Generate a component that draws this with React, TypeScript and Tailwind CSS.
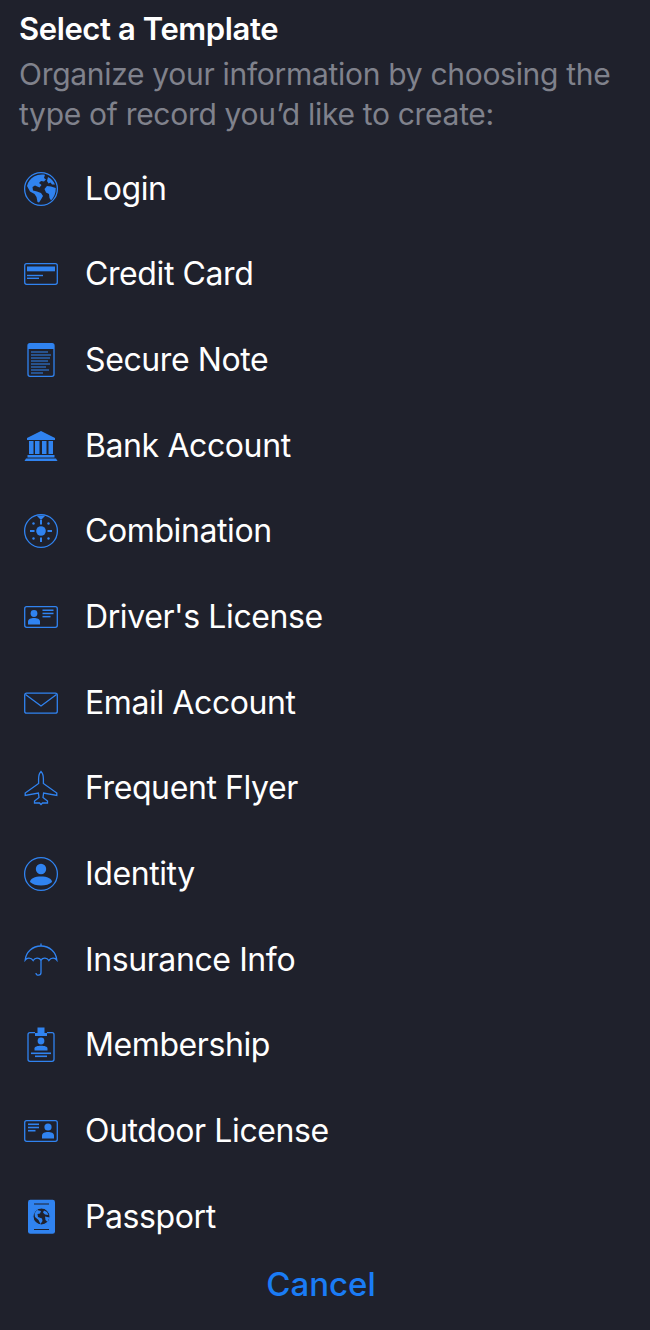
const blue = "#3083f0";

function Icon({ children }: { children: React.ReactNode }) {
  return (
    <svg viewBox="0 0 36 36" className="h-9 w-9 shrink-0" fill="none" stroke={blue} strokeWidth="1.3">
      {children}
    </svg>
  );
}

const Globe = () => (
  <Icon>
    <circle cx="18" cy="18" r="16.4" />
    <path
      fill={blue}
      stroke="none"
      d="M11 5.5 C14 3.6 19 3 22 3.8 L21 7 L23 8.5 L21 10.5 L18 10 L16 12 L18.5 14 L16.5 16.5 L12 14.5 L9.5 16 L10 19.5 L14 20.5 L18 22 L20 25 L18 28.5 L16 31.5 L14.5 31 L13.5 26 L11.5 23 L7 20.5 L4 15 C5 11 7.5 7.5 11 5.5 Z"
    />
    <path
      fill={blue}
      stroke="none"
      d="M25 6 C28 7.5 30.5 10 32 13.5 L29 13.5 L27.5 11.5 L25.5 12.5 L24 10 Z M24 15 L28 15.5 L32.8 17 C33 22 31 26.5 28 29.5 L26.5 27 L26 23 L23 21.5 L21.5 18 Z"
    />
  </Icon>
);

const Card = () => (
  <Icon>
    <rect x="1.7" y="7.7" width="32.6" height="20.6" rx="2" />
    <rect x="4" y="10.5" width="28" height="4.8" fill={blue} stroke="none" />
    <rect x="4" y="18.8" width="16" height="1.4" fill={blue} stroke="none" />
    <rect x="4" y="21.6" width="12" height="1.4" fill={blue} stroke="none" />
  </Icon>
);

const Note = () => (
  <Icon>
    <rect x="5" y="1.7" width="26" height="32.6" rx="2" />
    <path d="M5 7 V3.5 C5 2.4 5.9 1.7 7 1.7 H29 C30.1 1.7 31 2.4 31 3.5 V7 Z" fill={blue} stroke="none" />
    <path strokeWidth="1.2" d="M8 10 H25 M8 13 H28 M8 16 H27 M8 19 H25 M8 22 H27 M8 25 H23 M8 28 H26 M8 31 H20" />
  </Icon>
);

const Bank = () => (
  <Icon>
    <g fill={blue} stroke="none">
      <path d="M18 3 L32 10 V12 H4 V10 Z" />
      <rect x="6" y="13" width="4.5" height="13" />
      <rect x="12" y="13" width="4.5" height="13" />
      <rect x="19" y="13" width="4.5" height="13" />
      <rect x="25.5" y="13" width="4.5" height="13" />
      <rect x="4.5" y="27" width="27" height="2.5" />
      <path d="M3 30.5 H33 L34.5 33 H1.5 Z" />
    </g>
  </Icon>
);

const Combo = () => (
  <Icon>
    <circle cx="18" cy="18" r="16.4" />
    <path d="M13.5 2.4 H22.5 L18 7 Z" fill={blue} stroke="none" />
    <circle cx="18" cy="18" r="4.8" fill={blue} stroke="none" />
    <g fill={blue} stroke="none">
      <rect x="17" y="7" width="2" height="4.5" />
      <rect x="17" y="24.5" width="2" height="4.5" />
      <rect x="7" y="17" width="4.5" height="2" />
      <rect x="24.5" y="17" width="4.5" height="2" />
      <circle cx="10.5" cy="10.5" r="1.2" />
      <circle cx="25.5" cy="10.5" r="1.2" />
      <circle cx="10.5" cy="25.5" r="1.2" />
      <circle cx="25.5" cy="25.5" r="1.2" />
    </g>
  </Icon>
);

const License = () => (
  <Icon>
    <rect x="1.7" y="7.7" width="32.6" height="20.6" rx="2" />
    <g fill={blue} stroke="none">
      <circle cx="11" cy="14.5" r="3.4" />
      <path d="M5 25.5 V22.5 C5 20 8 19 11 19 C14 19 17 20 17 22.5 V25.5 Z" />
      <rect x="19.5" y="10.5" width="11" height="1.5" />
      <rect x="19.5" y="13.7" width="11" height="1.5" />
      <rect x="19.5" y="16.9" width="8" height="1.5" />
    </g>
  </Icon>
);

const Mail = () => (
  <Icon>
    <rect x="1.7" y="8.2" width="32.6" height="20" rx="2" />
    <path d="M2.5 9.5 L18 21 L33.5 9.5" />
  </Icon>
);

const Plane = () => (
  <Icon>
    <path d="M18 1.5 C19.6 3 20.4 6 20.4 9 V13.5 L33.8 23 V25.5 L20.6 23 L20 27.5 L24.5 31 V33 H19.5 L18 34.5 L16.5 33 H11.5 V31 L16 27.5 L15.4 23 L2.2 25.5 V23 L15.6 13.5 V9 C15.6 6 16.4 3 18 1.5 Z" />
  </Icon>
);

const Person = () => (
  <Icon>
    <circle cx="18" cy="18" r="16.4" />
    <circle cx="18" cy="13" r="5.2" fill={blue} stroke="none" />
    <path d="M7 26 C7 22.5 12 20.5 18 20.5 C24 20.5 29 22.5 29 26 C26.5 28.5 22.5 29.5 18 29.5 C13.5 29.5 9.5 28.5 7 26 Z" fill={blue} stroke="none" />
  </Icon>
);

const Umbrella = () => (
  <Icon>
    <path d="M18 1.5 V4" />
    <path d="M2.2 18 C3 10 9.5 4 18 4 C26.5 4 33 10 33.8 18 C32 15.5 28 15.5 25.8 18.5 C24 15.5 20 15.2 18 18 C16 15.2 12 15.5 10.2 18.5 C8 15.5 4 15.5 2.2 18 Z" />
    <path d="M18 17.5 V30.5 C18 34 13 34 13 31" />
  </Icon>
);

const Badge = () => (
  <Icon>
    <path d="M12 5.7 H7 C5.9 5.7 5 6.6 5 7.7 V32.3 C5 33.4 5.9 34.3 7 34.3 H29 C30.1 34.3 31 33.4 31 32.3 V7.7 C31 6.6 30.1 5.7 29 5.7 H24" />
    <g fill={blue} stroke="none">
      <path d="M14.5 0.5 H21.5 V6 H24 V9 H12 V6 H14.5 Z" />
      <circle cx="18" cy="14" r="3.4" />
      <path d="M11.5 23.5 V21.5 C11.5 19.5 14.5 18.7 18 18.7 C21.5 18.7 24.5 19.5 24.5 21.5 V23.5 Z" />
      <rect x="8" y="25.5" width="20" height="1.6" />
      <rect x="12" y="28.5" width="12" height="1.6" />
    </g>
  </Icon>
);

const Outdoor = () => (
  <Icon>
    <rect x="1.7" y="7.7" width="32.6" height="20.6" rx="2" />
    <g fill={blue} stroke="none">
      <circle cx="25" cy="14" r="3.6" />
      <path d="M19 25.5 V22.5 C19 20 22 19 25 19 C28 19 31 20 31 22.5 V25.5 Z" />
      <rect x="5" y="10.5" width="11" height="1.6" />
      <rect x="5" y="13.7" width="11" height="1.6" />
      <rect x="5" y="16.9" width="7.5" height="1.6" />
    </g>
  </Icon>
);

const Passport = () => (
  <Icon>
    <rect x="5" y="0.8" width="27" height="34" rx="2.4" fill={blue} stroke="none" />
    <circle cx="18.5" cy="17.5" r="8.6" fill="#1f212c" />
    <path
      fill={blue}
      stroke="none"
      d="M14 11 L18 12 L17 14.5 L14.5 15 L15 18 L19 19.5 L19.5 22 L17.5 25 L15.5 21 L12 18 L11.5 14.5 Z M21 11.5 L24 13 L25.5 16 L22 15.5 L20 13.5 Z M22 17.5 L26.5 18.5 L24.5 23 L22.5 21 Z"
    />
    <rect x="11" y="4.5" width="15" height="1" fill="#1f212c" stroke="none" />
    <rect x="11" y="30" width="15" height="1" fill="#1f212c" stroke="none" />
  </Icon>
);

const templates = [
  { name: "Login", icon: Globe },
  { name: "Credit Card", icon: Card },
  { name: "Secure Note", icon: Note },
  { name: "Bank Account", icon: Bank },
  { name: "Combination", icon: Combo },
  { name: "Driver's License", icon: License },
  { name: "Email Account", icon: Mail },
  { name: "Frequent Flyer", icon: Plane },
  { name: "Identity", icon: Person },
  { name: "Insurance Info", icon: Umbrella },
  { name: "Membership", icon: Badge },
  { name: "Outdoor License", icon: Outdoor },
  { name: "Passport", icon: Passport },
];

export default function App() {
  return (
    <div className="flex h-[1330px] w-[650px] flex-col overflow-hidden bg-[#1f212c] font-['Inter',sans-serif]">
      <div className="px-[19px] pt-[9px]">
        <h1 className="text-[31px] leading-[40px] font-semibold tracking-[-0.4px] text-white">Select a Template</h1>
        <p className="mt-[5px] text-[30px] leading-[40px] tracking-[-0.3px] text-[#80828c]">
          Organize your information by choosing the type of record you’d like to create:
        </p>
      </div>
      <ul className="mt-[12px] flex flex-col">
        {templates.map((t) => (
          <li key={t.name} className="flex h-[85.67px] items-center gap-[26px] pl-[23px]">
            <t.icon />
            <span className="text-[32px] tracking-[-0.4px] text-white">{t.name}</span>
          </li>
        ))}
      </ul>
      <button className="mt-[2px] pr-[8px] text-center text-[33px] leading-[44px] font-medium text-[#1a7cf5]">Cancel</button>
    </div>
  );
}
